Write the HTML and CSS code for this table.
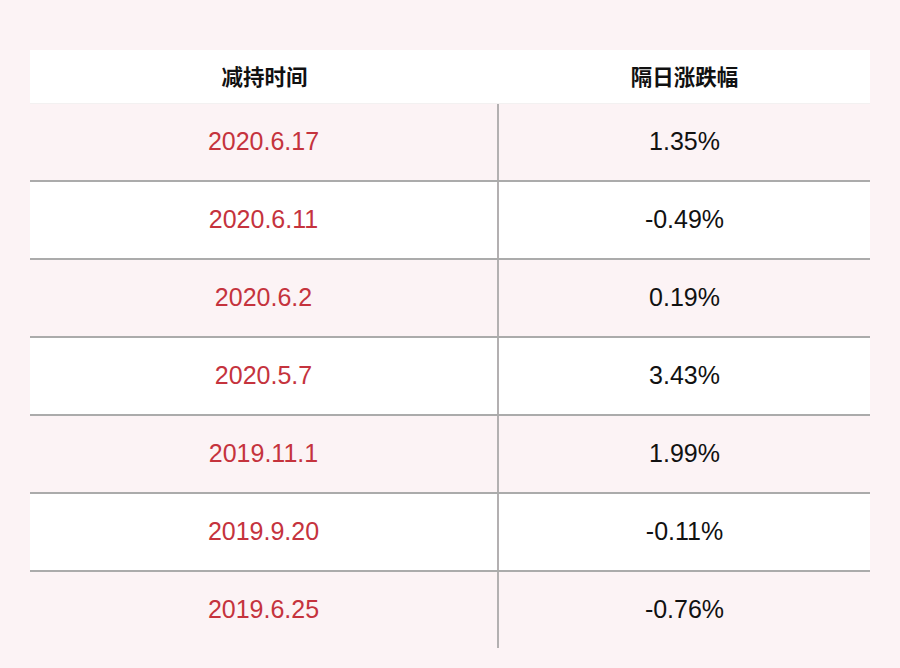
FILE: index.html
```html
<!DOCTYPE html>
<html>
<head>
<meta charset="utf-8">
<link rel="stylesheet" href="styles.css">
</head>
<body>
<div class="table">
  <div class="head">
    <div class="hcell">减持时间</div>
    <div class="hcell">隔日涨跌幅</div>
  </div>
  <div class="row odd"><div class="cell date">2020.6.17</div><div class="cell val">1.35%</div></div>
  <div class="row even"><div class="cell date">2020.6.11</div><div class="cell val">-0.49%</div></div>
  <div class="row odd"><div class="cell date">2020.6.2</div><div class="cell val">0.19%</div></div>
  <div class="row even"><div class="cell date">2020.5.7</div><div class="cell val">3.43%</div></div>
  <div class="row odd"><div class="cell date">2019.11.1</div><div class="cell val">1.99%</div></div>
  <div class="row even"><div class="cell date">2019.9.20</div><div class="cell val">-0.11%</div></div>
  <div class="row odd last"><div class="cell date">2019.6.25</div><div class="cell val">-0.76%</div></div>
</div>
</body>
</html>
```
FILE: styles.css
```css
html, body {
  margin: 0;
  padding: 0;
  background: #fcf3f5;
}
body {
  width: 900px;
  height: 668px;
  padding-top: 50px;
  box-sizing: border-box;
  font-family: "Liberation Sans", Arial, "Noto Sans CJK SC", sans-serif;
}
.table {
  margin-left: 30px;
  width: 840px;
}
.head {
  display: grid;
  grid-template-columns: 469px 371px;
  height: 54px;
  background: #ffffff;
  border-bottom: 1px solid #f3f1f1;
  box-sizing: border-box;
}
.hcell {
  display: flex;
  align-items: center;
  justify-content: center;
  font-family: "Noto Sans CJK SC", sans-serif;
  font-weight: bold;
  font-size: 21.5px;
  color: #111;
  padding-bottom: 2px;
}
.row {
  display: grid;
  grid-template-columns: 469px 371px;
  height: 78px;
  border-bottom: 2px solid #ababab;
  box-sizing: border-box;
}
.row.last {
  border-bottom: none;
  height: 76px;
}
.row.odd { background: #fcf3f5; }
.row.even { background: #ffffff; }
.cell {
  display: flex;
  align-items: center;
  justify-content: center;
  font-size: 25px;
  padding-bottom: 2px;
}
.date {
  color: #c5333d;
  border-right: 2px solid #b3b0b1;
}
.val {
  color: #111;
}
```
